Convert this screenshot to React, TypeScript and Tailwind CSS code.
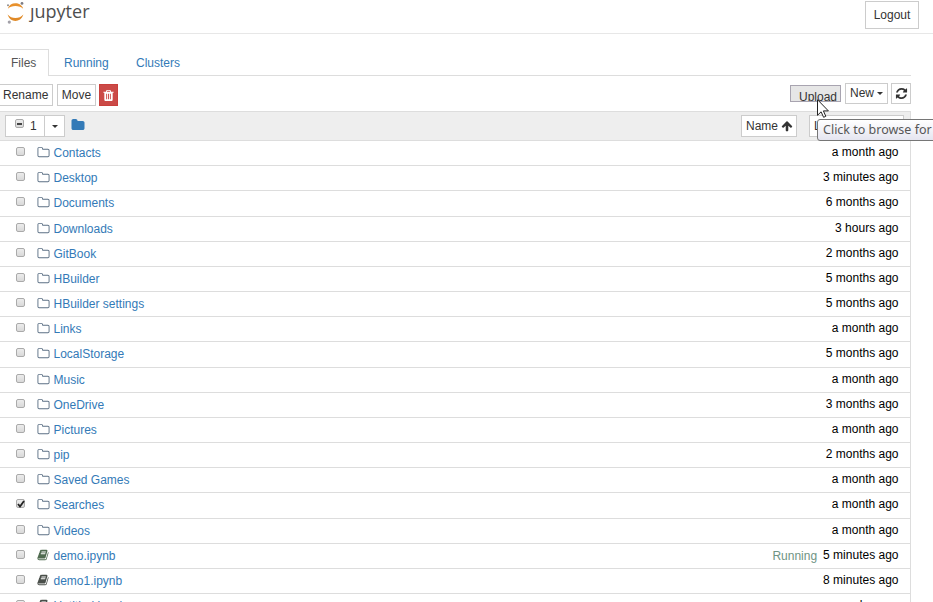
import React from "react";

const PATHS = {
  folderO:
    "M1600 1312v-704q0-40-28-68t-68-28h-704q-40 0-68-28t-28-68v-64q0-40-28-68t-68-28h-320q-40 0-68 28t-28 68v960q0 40 28 68t68 28h1216q40 0 68-28t28-68zm128-704v704q0 92-66 158t-158 66h-1216q-92 0-158-66t-66-158v-960q0-92 66-158t158-66h320q92 0 158 66t66 158v32h672q92 0 158 66t66 158z",
  folder:
    "M1728 608v704q0 92-66 158t-158 66h-1216q-92 0-158-66t-66-158v-960q0-92 66-158t158-66h320q92 0 158 66t66 158v32h672q92 0 158 66t66 158z",
  book: "M1703 478q40 57 18 129l-275 906q-19 64-76.500 107.500t-122.500 43.500h-923q-77 0-148.500-53.500t-99.500-131.500q-24-67-2-127 0-4 3-27t4-37q1-8-3-21.500t-3-19.500q2-11 8-21t16.500-23.500 16.500-23.500q23-38 45-91.500t30-91.500q3-10 .5-30t-.5-28q3-11 17-28t17-23q21-36 42-92t25-90q1-9-2.500-32t.5-28q4-13 22-30.500t22-22.500q19-26 42.500-84.500t27.500-96.500q1-8-3-25.500t-2-26.500q2-8 9-18t18-23 17-21q8-12 16.500-30.500t15-35 16-36 19.500-32 26.500-23.500 36-11.500 47.500 5.500l-1 3q38-9 51-9h761q74 0 114 56t18 130l-274 906q-36 119-71.500 153.500t-128.500 34.500h-869q-27 0-38 15-11 16-1 43 24 70 144 70h923q29 0 56-15.500t35-41.500l300-987q7-22 5-57 38 15 59 43zm-1064 2q-4 13 2 22.500t20 9.500h608q13 0 25.500-9.500t16.500-22.500l21-64q4-13-2-22.500t-20-9.500h-608q-13 0-25.500 9.500t-16.500 22.500zm-83 256q-4 13 2 22.500t20 9.500h608q13 0 25.500-9.500t16.500-22.500l21-64q4-13-2-22.500t-20-9.500h-608q-13 0-25.500 9.500t-16.500 22.500z",
  trash:
    "M704 1376v-704q0-14-9-23t-23-9h-64q-14 0-23 9t-9 23v704q0 14 9 23t23 9h64q14 0 23-9t9-23zm256 0v-704q0-14-9-23t-23-9h-64q-14 0-23 9t-9 23v704q0 14 9 23t23 9h64q14 0 23-9t9-23zm256 0v-704q0-14-9-23t-23-9h-64q-14 0-23 9t-9 23v704q0 14 9 23t23 9h64q14 0 23-9t9-23zm-544-992h448l-48-117q-7-9-17-11h-317q-10 2-17 11zm928 32v64q0 14-9 23t-23 9h-96v948q0 83-47 143.500t-113 60.500h-832q-66 0-113-58.500t-47-141.500v-952h-96q-14 0-23-9t-9-23v-64q0-14 9-23t23-9h309l70-167q15-37 54-63t79-26h320q40 0 79 26t54 63l70 167h309q14 0 23 9t9 23z",
  refresh:
    "M1639 1056q0 5-1 7-64 268-268 434.500t-478 166.500q-146 0-282.500-55t-243.500-157l-129 129q-19 19-45 19t-45-19-19-45v-448q0-26 19-45t45-19h448q26 0 45 19t19 45-19 45l-137 137q71 66 161 102t187 36q134 0 250-65t186-179q11-17 53-117 8-23 30-23h192q13 0 22.500 9.500t9.500 22.500zm25-800v448q0 26-19 45t-45 19h-448q-26 0-45-19t-19-45 19-45l138-138q-148-137-349-137-134 0-250 65t-186 179q-11 17-53 117-8 23-30 23h-199q-13 0-22.500-9.500t-9.500-22.500v-7q65-268 270-434.500t480-166.500q146 0 284 55.500t245 156.500l130-129q19-19 45-19t45 19 19 45z",
  arrowUp:
    "M1675 971q0 51-37 90l-75 75q-38 38-91 38-54 0-90-38l-294-293v704q0 52-37.500 84.500t-90.500 32.500h-128q-53 0-90.500-32.500t-37.500-84.500v-704l-294 293q-36 38-90 38t-90-38l-75-75q-38-38-38-90 0-53 38-91l651-651q35-37 90-37 54 0 91 37l651 651q37 39 37 91z",
};

function Icon({ name, className }: { name: keyof typeof PATHS; className: string }) {
  return (
    <svg viewBox="0 0 1792 1792" fill="currentColor" className={`shrink-0 ${className}`}>
      <path d={PATHS[name]} />
    </svg>
  );
}

function Logo() {
  return (
    <svg viewBox="0 0 18 24" className="h-6 w-[18px] shrink-0">
      <path d="M1.600 9C3.200 5 6 3.300 9.400 3.300s6.400 1.700 8 5.700C15.200 6.900 12.600 6.100 9.400 6.100S3.800 6.900 1.600 9z" fill="#e8912d" />
      <path d="M1.600 14.600c1.600 4.600 4.400 6.400 7.800 6.400s6.400-1.800 8-6.400c-2.200 2.500-4.800 3.500-8 3.500s-5.600-1-7.800-3.500z" fill="#e08a27" />
      <circle cx="16" cy="3.400" r="1.400" fill="#7c7c84" />
      <circle cx="2" cy="5.200" r="1" fill="#8c8c90" />
      <circle cx="3.300" cy="22.100" r="1.600" fill="#a2a0a8" />
    </svg>
  );
}

function Check({ state = "off" }: { state?: "off" | "on" | "mixed" }) {
  return (
    <span className="flex h-[9px] w-[9px] shrink-0 items-center justify-center rounded-[2px] border border-[#aaa] bg-linear-to-b from-[#ececec] to-[#d9d9d9]">
      {state === "mixed" && <span className="h-[2px] w-[5px] bg-[#444]" />}
      {state === "on" && (
        <svg viewBox="0 0 8 8" className="h-[8px] w-[8px] shrink-0">
          <path d="M1 4l2 2.500L7 1" fill="none" stroke="#222" strokeWidth="1.800" />
        </svg>
      )}
    </span>
  );
}

function Caret() {
  return <span className="h-0 w-0 border-x-[3px] border-t-[3px] border-x-transparent border-t-[#333]" />;
}

type Entry = { name: string; time: string; book?: boolean; checked?: boolean; running?: boolean };

const ENTRIES: Entry[] = [
  { name: "Contacts", time: "a month ago" },
  { name: "Desktop", time: "3 minutes ago" },
  { name: "Documents", time: "6 months ago" },
  { name: "Downloads", time: "3 hours ago" },
  { name: "GitBook", time: "2 months ago" },
  { name: "HBuilder", time: "5 months ago" },
  { name: "HBuilder settings", time: "5 months ago" },
  { name: "Links", time: "a month ago" },
  { name: "LocalStorage", time: "5 months ago" },
  { name: "Music", time: "a month ago" },
  { name: "OneDrive", time: "3 months ago" },
  { name: "Pictures", time: "a month ago" },
  { name: "pip", time: "2 months ago" },
  { name: "Saved Games", time: "a month ago" },
  { name: "Searches", time: "a month ago", checked: true },
  { name: "Videos", time: "a month ago" },
  { name: "demo.ipynb", time: "5 minutes ago", book: true, running: true },
  { name: "demo1.ipynb", time: "8 minutes ago", book: true },
  { name: "Untitled.ipynb", time: "a day ago", book: true },
];

function Row({ entry }: { entry: Entry }) {
  const iconColor = entry.running ? "text-[#4f6b4f]" : "text-[#4a4f4a]";
  return (
    <div className="flex h-[25.18px] shrink-0 items-start border-b border-[#ddd] pr-[11.5px] pl-4">
      <span className="pt-[6px]">
        <Check state={entry.checked ? "on" : "off"} />
      </span>
      <span className="ml-[11.500px] flex w-[17px] pt-[5px]">
        {entry.book ? (
          <Icon name="book" className={`h-[12px] w-[12px] ${iconColor}`} />
        ) : (
          <Icon name="folderO" className="h-[13px] w-[13px] text-[#5c7085]" />
        )}
      </span>
      <span className="pt-[3px] leading-[18px] text-[#337ab7]">{entry.name}</span>
      {entry.running && <span className="ml-auto pt-[3px] leading-[18px] text-[#6f9484]">Running</span>}
      <span className={`pt-[2px] leading-[18px] text-black ${entry.running ? "ml-[6px]" : "ml-auto"}`}>{entry.time}</span>
    </div>
  );
}

export default function App() {
  return (
    <div className="relative flex h-[602px] w-[933px] flex-col overflow-hidden bg-white font-['Liberation_Sans',Arial,sans-serif] text-[12px] text-[#333]">
      <header className="flex h-[34px] shrink-0 items-start border-b border-[#e7e7e7] pr-[14px] pl-[6px]">
        <Logo />
        <span className="ml-[6px] flex font-['Open_Sans','Noto_Sans',sans-serif] text-[18px] leading-[22px] text-[#4e4e4e]">
          <span className="[clip-path:inset(7px_-4px_-6px_-6px)]">j</span>upyter
        </span>
        <button className="mt-px ml-auto flex h-7 w-[54px] items-center justify-center border border-[#ccc]">Logout</button>
      </header>

      <nav className="mt-[15px] flex h-[27px] w-[911px] shrink-0 items-stretch leading-[28px] text-[#337ab7]">
        <span className="w-[49px] border-t border-r border-[#ddd] pl-[11px] leading-[26px] text-[#555]">Files</span>
        <span className="w-[87px] border-b border-[#ddd] pl-[15px]">Running</span>
        <span className="grow border-b border-[#ddd]">Clusters</span>
      </nav>

      <div className="flex h-[35px] w-[911px] shrink-0 items-start">
        <button className="mt-2 flex h-[22px] w-[53px] items-center border border-l-0 border-[#ccc] pl-[3px]">Rename</button>
        <button className="mt-2 ml-1 flex h-[22px] w-[39px] items-center justify-center border border-[#ccc]">Move</button>
        <button className="mt-2 ml-[3px] flex h-[22px] w-[19px] items-center justify-center border border-[#c9403c] bg-[#cb4a47] text-white">
          <Icon name="trash" className="h-[13px] w-[13px]" />
        </button>
        <button className="mt-[9px] ml-auto h-[17px] w-[51px] overflow-hidden border border-[#a8a4b0] bg-[#e6e6e6] pl-[8px] text-left leading-[22px]">
          Upload
        </button>
        <button className="mt-[7px] ml-1 flex h-[21px] w-[43px] items-center border border-[#ccc] pb-px pl-1">
          New
          <span className="ml-[3px] flex">
            <Caret />
          </span>
        </button>
        <button className="mt-[7px] ml-[3px] flex h-[21px] w-5 items-center justify-center border border-[#ccc] pb-px">
          <Icon name="refresh" className="h-[13px] w-[13px]" />
        </button>
      </div>

      <main className="flex w-[911px] shrink-0 flex-col border-t border-r border-[#ddd]">
        <div className="flex h-[29px] shrink-0 items-start border-b border-[#ddd] bg-[#eee] pt-[3px] pr-[6px] pl-[5px]">
          <div className="flex h-[22px] w-[60px] border border-[#ccc] bg-white">
            <div className="flex w-[39px] border-r border-[#ccc] pl-[9px]">
              <span className="pt-[3px]">
                <Check state="mixed" />
              </span>
              <span className="ml-[6px] leading-[21px]">1</span>
            </div>
            <div className="flex grow items-center justify-center">
              <Caret />
            </div>
          </div>
          <Icon name="folder" className="mt-[3px] ml-[6px] h-[14px] w-[14px] text-[#337ab7]" />
          <button className="ml-auto flex h-[22px] w-[56px] items-center border border-[#ccc] bg-white pl-1">
            Name
            <Icon name="arrowUp" className="ml-[3px] h-[12px] w-[12px]" />
          </button>
          <button className="ml-3 h-[22px] w-[95px] overflow-hidden border border-[#ccc] bg-white pl-1 text-left leading-[20px] whitespace-nowrap">
            Last Modified
          </button>
        </div>
        {ENTRIES.map((e) => (
          <Row key={e.name} entry={e} />
        ))}
      </main>

      <div className="absolute top-[119px] left-[817px] h-[22px] w-[140px] rounded-[3px] border border-[#767676] bg-linear-to-b from-white to-[#e5e5f0] pl-[5px] font-['Noto_Sans','Open_Sans',sans-serif] text-[12.500px] leading-[20px] whitespace-nowrap text-[#575757]">
        Click to browse for
      </div>
      <svg viewBox="0 0 12 19" className="absolute top-[99px] left-[817px] h-[19px] w-3">
        <path d="M.5.7v15.600l3.600-3.500 2.500 5.500 2.200-1-2.400-5.400h5z" fill="#fff" stroke="#222" />
      </svg>
    </div>
  );
}
